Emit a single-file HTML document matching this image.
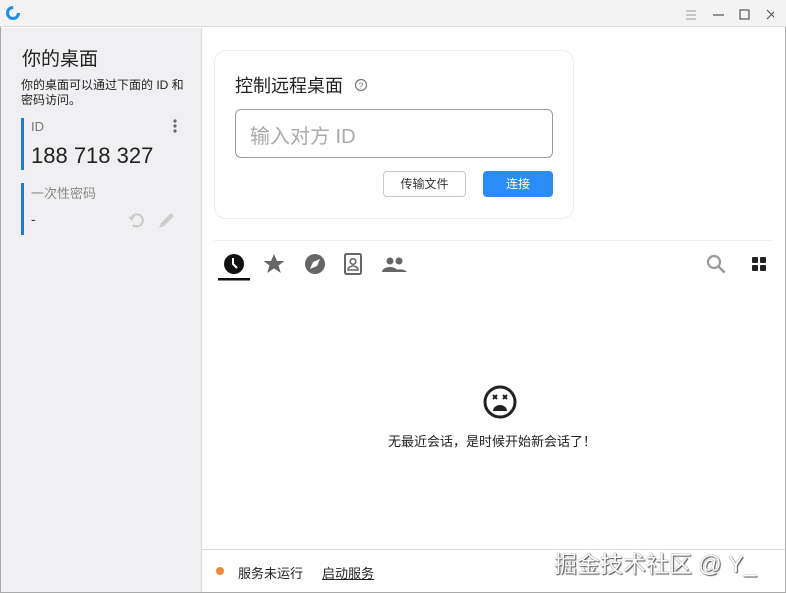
<!DOCTYPE html>
<html><head><meta charset="utf-8"><style>
*{margin:0;padding:0;box-sizing:border-box}
body{width:786px;height:593px;overflow:hidden;font-family:"Liberation Sans","Noto Sans CJK SC",sans-serif;background:#fff;position:relative;color:#222}
.a{position:absolute}
</style></head><body>
<div class="a" style="left:0;top:0;width:786px;height:593px;border:1px solid #a8a8a8;border-top:none"></div>
<div class="a" style="left:0;top:0;width:786px;height:27px;background:#f3f3f3;border-bottom:1px solid #dcdcdc"></div>
<svg class="a" style="left:5px;top:5px" width="16" height="16" viewBox="0 0 16 16"><circle cx="8" cy="8" r="5.5" fill="none" stroke="#1c8ef0" stroke-width="3" stroke-dasharray="26 9"/></svg>
<svg class="a" style="left:684px;top:8px" width="90" height="14" viewBox="0 0 90 14">
<path d="M2 3h10M2 7h10M2 11h10" stroke="#999" stroke-width="1"/>
<path d="M29 7h11" stroke="#555" stroke-width="1.2"/>
<rect x="56" y="2" width="9" height="9" fill="none" stroke="#555" stroke-width="1.2"/>
<path d="M83 2l9 9M92 2l-9 9" stroke="#555" stroke-width="1.1"/>
</svg>
<div class="a" style="left:1px;top:28px;width:201px;height:564px;background:#f0f0f2;border-right:1px solid #dcdcdc"></div>
<div class="a" style="left:22px;top:44px;font-size:19px;color:#222">你的桌面</div>
<div class="a" style="left:21px;top:78px;font-size:12px;line-height:15px;color:#222;width:168px">你的桌面可以通过下面的 ID 和密码访问。</div>
<div class="a" style="left:21px;top:118px;width:3px;height:52px;background:#1c7ad9"></div>
<div class="a" style="left:31px;top:119px;font-size:13px;color:#777">ID</div>
<svg class="a" style="left:172px;top:118px" width="6" height="16"><circle cx="3" cy="3" r="1.6" fill="#666"/><circle cx="3" cy="8" r="1.6" fill="#666"/><circle cx="3" cy="13" r="1.6" fill="#666"/></svg>
<div class="a" style="left:31px;top:143px;font-size:22px;color:#222">188 718 327</div>
<div class="a" style="left:21px;top:183px;width:3px;height:52px;background:#1c7ad9"></div>
<div class="a" style="left:31px;top:183px;font-size:13px;color:#888">一次性密码</div>
<div class="a" style="left:31px;top:211px;font-size:14px;color:#333">-</div>
<svg class="a" style="left:127px;top:211px" width="50" height="20" viewBox="0 0 50 20">
<path d="M4 8a6 6 0 1 1 2 6" fill="none" stroke="#ccc" stroke-width="2.2"/><path d="M1 6l4 4 3-5z" fill="#ccc"/>
<path d="M32 17l2-5 10-10 3 3-10 10z" fill="#ccc"/>
</svg>
<div class="a" style="left:214px;top:50px;width:360px;height:169px;border:1px solid #ececec;border-radius:12px;background:#fff"></div>
<div class="a" style="left:235px;top:72px;font-size:18px;color:#222">控制远程桌面</div>
<svg class="a" style="left:354px;top:78px" width="14" height="14" viewBox="0 0 14 14"><circle cx="7" cy="7" r="5.5" fill="none" stroke="#777" stroke-width="1.2"/><text x="7" y="10.3" font-size="8.5" text-anchor="middle" fill="#777" font-family="Liberation Sans">?</text></svg>
<div class="a" style="left:235px;top:109px;width:318px;height:49px;border:1px solid #9a9a9a;border-radius:6px"></div>
<div class="a" style="left:250px;top:120px;font-size:20px;color:#aaa">输入对方 ID</div>
<div class="a" style="left:383px;top:171px;width:83px;height:26px;border:1px solid #c8c8c8;border-radius:4px;font-size:12px;text-align:center;line-height:24px;color:#333">传输文件</div>
<div class="a" style="left:483px;top:171px;width:70px;height:26px;background:#2a8cf7;border-radius:4px;font-size:12px;text-align:center;line-height:26px;color:#fff">连接</div>
<div class="a" style="left:214px;top:240px;width:558px;height:1px;background:#f0f0f0"></div>
<svg class="a" style="left:215px;top:250px" width="200" height="32" viewBox="0 0 200 32">
<circle cx="19" cy="14" r="10" fill="#111"/><path d="M18 8v6l4 4" stroke="#fff" stroke-width="2" fill="none"/>
<rect x="3" y="28" width="32" height="2.5" fill="#111"/>
<path d="M59 4l3 7h7.5l-6 4.5 2.3 7.5-6.8-4.6-6.8 4.6 2.3-7.5-6-4.5h7.5z" fill="#666"/>
<circle cx="100" cy="14" r="10" fill="#666"/><path d="M105 9l-3 7-7 3 3-7z" fill="#fff"/>
<rect x="130" y="4" width="16" height="20" rx="1.5" fill="none" stroke="#666" stroke-width="2"/><circle cx="138" cy="11.5" r="2.8" fill="none" stroke="#666" stroke-width="1.6"/><path d="M133 20a5 4 0 0 1 10 0z" fill="none" stroke="#666" stroke-width="1.6"/>
<circle cx="175" cy="11" r="3.5" fill="#666"/><circle cx="184" cy="11" r="3.5" fill="#666"/><path d="M167 22a8 5 0 0 1 16 0zM178 22a8 5 0 0 1 14 0z" fill="#666"/>
</svg>
<svg class="a" style="left:705px;top:253px" width="65" height="22" viewBox="0 0 65 22">
<circle cx="9" cy="9" r="6" fill="none" stroke="#999" stroke-width="2.2"/><path d="M13.5 13.5l6 6" stroke="#999" stroke-width="2.5"/>
<rect x="47" y="4" width="6" height="6" rx="1" fill="#222"/><rect x="55" y="4" width="6" height="6" rx="1" fill="#222"/><rect x="47" y="12" width="6" height="6" rx="1" fill="#222"/><rect x="55" y="12" width="6" height="6" rx="1" fill="#222"/>
</svg>
<svg class="a" style="left:482px;top:384px" width="36" height="36" viewBox="0 0 36 36">
<circle cx="18" cy="18" r="15" fill="none" stroke="#222" stroke-width="3"/>
<path d="M11 11l4 4M15 11l-4 4M21 11l4 4M25 11l-4 4" stroke="#222" stroke-width="2"/>
<path d="M11 27a7 6 0 0 1 14 0z" fill="#222"/>
</svg>
<div class="a" style="left:388px;top:431px;font-size:13px;color:#222">无最近会话，是时候开始新会话了！</div>
<div class="a" style="left:202px;top:549px;width:583px;height:1px;background:#dcdcdc"></div>
<div class="a" style="left:216px;top:567px;width:8px;height:8px;border-radius:50%;background:#f0893a"></div>
<div class="a" style="left:238px;top:563px;font-size:13px;color:#222">服务未运行</div>
<div class="a" style="left:322px;top:563px;font-size:13px;color:#222;text-decoration:underline">启动服务</div>
<div class="a" style="left:554px;top:545px;font-size:23px;color:#fff;text-shadow:0 0 1px #444,1px 1px 1px #555;letter-spacing:0px">掘金技术社区 @ Y_</div>
</body></html>
